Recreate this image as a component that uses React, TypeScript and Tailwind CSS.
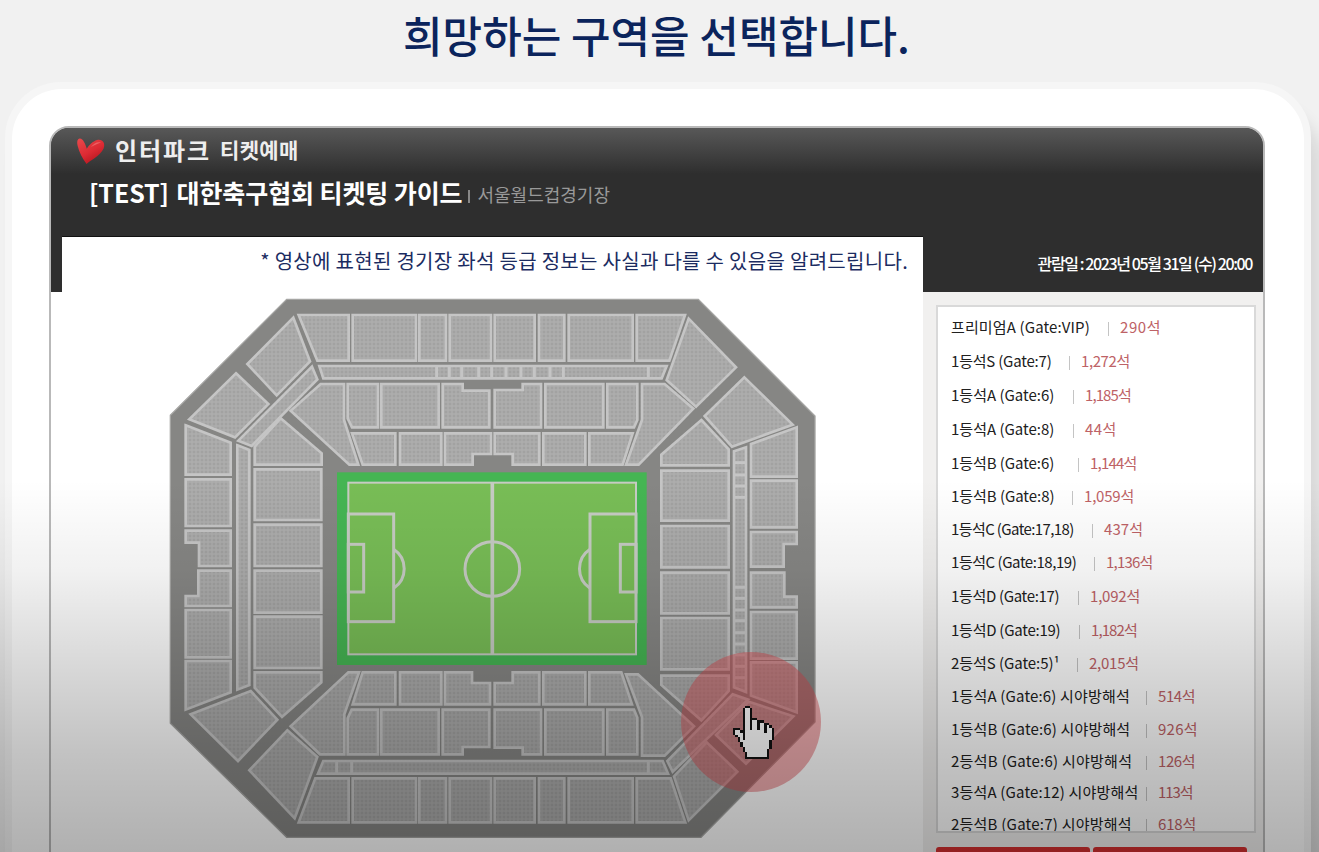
import React from "react";

type Zone = {
  name: string;
  seats: string;
  height: number;
  bar: number;
  nameSpacing: number;
  seatSpacing: number;
};

const zones: Zone[] = [
  { name: "프리미엄A (Gate:VIP)", seats: "290석", height: 34, bar: 157, nameSpacing: 0.13, seatSpacing: 0.6 },
  { name: "1등석S (Gate:7)", seats: "1,272석", height: 34, bar: 118, nameSpacing: -0.2, seatSpacing: -0.4 },
  { name: "1등석A (Gate:6)", seats: "1,185석", height: 34, bar: 122, nameSpacing: 0, seatSpacing: -0.9 },
  { name: "1등석A (Gate:8)", seats: "44석", height: 34, bar: 122, nameSpacing: 0, seatSpacing: 0.4 },
  { name: "1등석B (Gate:6)", seats: "1,144석", height: 34, bar: 127, nameSpacing: -0.07, seatSpacing: -0.8 },
  { name: "1등석B (Gate:8)", seats: "1,059석", height: 33, bar: 121, nameSpacing: -0.05, seatSpacing: -0.2 },
  { name: "1등석C (Gate:17,18)", seats: "437석", height: 32, bar: 141, nameSpacing: -0.6, seatSpacing: 0.1 },
  { name: "1등석C (Gate:18,19)", seats: "1,136석", height: 34, bar: 143, nameSpacing: -0.45, seatSpacing: -0.8 },
  { name: "1등석D (Gate:17)", seats: "1,092석", height: 34, bar: 127, nameSpacing: -0.33, seatSpacing: -0.2 },
  { name: "1등석D (Gate:19)", seats: "1,182석", height: 34, bar: 128, nameSpacing: -0.25, seatSpacing: -0.9 },
  { name: "2등석S (Gate:5)¹", seats: "2,015석", height: 33, bar: 126, nameSpacing: -0.05, seatSpacing: -0.25 },
  { name: "1등석A (Gate:6) 시야방해석", seats: "514석", height: 33, bar: 195, nameSpacing: 0.17, seatSpacing: -0.4 },
  { name: "1등석B (Gate:6) 시야방해석", seats: "926석", height: 32, bar: 195, nameSpacing: 0.15, seatSpacing: 0.25 },
  { name: "2등석B (Gate:6) 시야방해석", seats: "126석", height: 32, bar: 195, nameSpacing: 0.25, seatSpacing: -0.4 },
  { name: "3등석A (Gate:12) 시야방해석", seats: "113석", height: 31, bar: 195, nameSpacing: 0.17, seatSpacing: -1.1 },
  { name: "2등석B (Gate:7) 시야방해석", seats: "618석", height: 32, bar: 195, nameSpacing: 0.23, seatSpacing: -0.2 },
];

const box = (x1: number, y1: number, x2: number, y2: number) =>
  `${x1},${y1} ${x2},${y1} ${x2},${y2} ${x1},${y2}`;

// Seat blocks are grouped by the part of the stand they belong to.
const stands: { x: number; y: number; blocks: string[] }[] = [
  {
    x: 0,
    y: 0,
    blocks: [
      "416,75 566,75 566,212 472,212",
      box(578, 75, 768, 212),
      box(778, 75, 858, 212),
      box(869, 75, 993, 212),
      "478,228 1520,228 1505,265 490,265",
      "400,83 450,214 350,316 262,222",
      "456,230 472,268 275,468 235,452",
      "228,250 325,342 225,442 88,388",
      "77,406 212,458 212,554 77,554",
      "482,282 552,282 552,390 595,524 568,524 392,362",
      "362,385 485,490 485,524 284,524 284,470",
      "232,466 268,480 268,1185 232,1199",
      "563,282 654,282 654,412 576,412 563,385",
      box(664, 282, 836, 412),
      "848,282 908,282 908,302 988,302 988,412 848,412",
      "576,430 706,430 706,524 608,524",
      box(720, 430, 844, 524),
      "855,430 993,430 993,492 938,492 938,524 855,524",
    ],
  },
  {
    x: 990,
    y: 0,
    blocks: [
      box(14, 75, 134, 212),
      box(147, 75, 223, 212),
      box(236, 75, 428, 212),
      "440,75 585,75 538,212 440,212",
      "596,86 738,232 618,350 530,270",
      "763,262 908,404 726,470 644,378",
      "456,282 524,282 610,356 446,524 408,524 456,390",
      "634,390 716,478 716,526 514,526 514,494",
      "783,462 920,412 920,560 783,560",
      "732,484 768,472 768,1206 732,1192",
      "14,300 98,300 98,282 153,282 153,412 14,412",
      box(166, 282, 340, 412),
      "352,282 442,282 442,390 432,412 352,412",
      "14,430 148,430 148,524 68,524 68,492 14,492",
      box(160, 430, 286, 524),
      "298,430 428,430 398,524 298,524",
    ],
  },
  {
    x: 0,
    y: 540,
    blocks: [
      box(77, 28, 212, 168),
      "77,182 212,182 212,288 117,288 117,218 77,218",
      "115,302 212,302 212,408 77,408 77,378 115,378",
      box(77, 420, 212, 562),
      box(284, -2, 484, 150),
      box(284, 164, 484, 288),
      box(284, 302, 484, 428),
      box(284, 440, 484, 594),
    ],
  },
  {
    x: 990,
    y: 540,
    blocks: [
      box(783, 32, 920, 172),
      "783,186 920,186 920,222 881,222 881,290 783,290",
      "783,308 883,308 883,380 920,380 920,412 783,412",
      box(783, 426, 920, 566),
      box(514, 2, 716, 152),
      box(514, 168, 716, 292),
      box(514, 308, 716, 430),
      box(514, 444, 716, 598),
    ],
  },
  {
    x: 0,
    y: 1095,
    blocks: [
      "77,18 212,18 212,112 77,164",
      "284,52 484,52 484,82 366,186 284,98",
      "272,108 352,194 234,318 92,178",
      "382,226 472,306 404,490 268,346",
      "565,52 597,52 553,178 553,298 480,298 392,214",
      "608,52 706,52 706,148 578,148",
      box(720, 52, 844, 148),
      "855,52 936,52 936,84 990,84 990,148 855,148",
      "575,164 654,164 654,298 563,298 563,190",
      box(664, 164, 836, 298),
      "848,164 988,164 988,276 908,276 908,298 848,298",
      "490,318 1508,318 1524,356 474,356",
      "466,370 566,370 566,502 416,502",
      box(578, 370, 768, 502),
      box(778, 370, 858, 502),
      box(869, 370, 993, 502),
    ],
  },
  {
    x: 990,
    y: 1095,
    blocks: [
      box(14, 370, 134, 502),
      box(147, 370, 223, 502),
      box(236, 370, 428, 502),
      "440,370 542,370 586,502 440,502",
      "552,364 650,262 742,350 596,496",
      "728,118 774,134 548,350 532,318",
      "776,140 910,184 768,326 678,240",
      "783,22 920,22 920,172 783,122",
      "514,62 716,62 716,108 634,196 514,90",
      "408,58 444,58 612,214 524,302 456,302 456,186",
      "68,52 148,52 148,148 14,148 14,84 68,84",
      box(160, 52, 286, 148),
      "298,52 394,52 426,148 298,148",
      "14,164 153,164 153,298 98,298 98,278 14,278",
      box(166, 164, 340, 298),
      "352,164 432,164 442,188 442,298 352,298",
    ],
  },
];

const topTicks = [830, 868, 905, 956, 995, 1038, 1083, 1123, 1170, 1210, 1465];
const sideTicks = [518, 555, 588, 622, 892, 925, 960, 992, 1028, 1062, 1095, 1129, 1163];

function Stadium() {
  return (
    <svg className="block overflow-visible" width="655" height="550" viewBox="0 0 1965 1650">
      <defs>
        <pattern id="seats" width="12" height="12" patternUnits="userSpaceOnUse">
          <rect width="12" height="12" fill="#afafae" />
          <rect x="2" y="2" width="8" height="8" fill="#a2a2a1" />
        </pattern>
      </defs>
      <polygon
        points="31,376 380,28 1615,28 1965,378 1965,1296 1623,1642 380,1642 31,1300"
        fill="#868684"
        stroke="#a5a5a3"
        strokeWidth="4"
      />
      <g fill="url(#seats)" stroke="#c5c5c5" strokeWidth="8">
        {stands.map((s, i) => (
          <g key={i} transform={`translate(${s.x} ${s.y})`}>
            {s.blocks.map((p) => (
              <polygon key={p} points={p} />
            ))}
          </g>
        ))}
      </g>
      <g stroke="#c5c5c5" strokeWidth="9">
        {topTicks.map((x) => (
          <line key={x} x1={x} x2={x} y1="228" y2="265" />
        ))}
        {[530, 575, 1465].map((x) => (
          <line key={x} x1={x} x2={x} y1="1413" y2="1451" />
        ))}
        {sideTicks.map((y) => (
          <line key={y} y1={y} y2={y} x1="1722" x2="1758" />
        ))}
      </g>
      <g transform="translate(0 540)">
        <rect x="531" y="7" width="929" height="578" fill="#45b553" />
        <g fill="none" stroke="#c6cbc3" strokeWidth="9">
          <rect x="565" y="38" width="863" height="515" fill="#78bd56" strokeWidth="6" />
          <line x1="997" x2="997" y1="38" y2="553" strokeWidth="11" />
          <circle cx="997" cy="297" r="82" />
          <rect x="565" y="132" width="136" height="323" />
          <rect x="565" y="223" width="46" height="143" />
          <path d="M701 238A70 70 0 0 1 701 355" />
          <rect x="1290" y="132" width="138" height="323" />
          <rect x="1381" y="223" width="47" height="143" />
          <path d="M1290 238A70 70 0 0 0 1290 355" />
        </g>
      </g>
    </svg>
  );
}

// Pointer glyph: X is outline, o is fill.
const hand = [
  ".....XX..........",
  "....XooX.........",
  "....XooX.........",
  "....XooX.........",
  "....XooX.........",
  "....XooXXX.......",
  "....XooXooXXX....",
  "....XooXooXooXX..",
  "....XooXooXooXoX.",
  "XXX.XooXooXooXooX",
  "XooXXooooooooXooX",
  "XoooXoooooooooooX",
  ".XooXoooooooooooX",
  "..XoXoooooooooooX",
  "..XooooooooooooX.",
  "...XoooooooooooX.",
  "...XoooooooooooX.",
  "....XooooooooooX.",
  "....XoooooooooX..",
  ".....XooooooooX..",
  ".....XooooooooX..",
  ".....XXXXXXXXXX..",
];

function HandPointer() {
  return (
    <svg
      className="absolute left-[733px] top-[706px]"
      width="41"
      height="53"
      viewBox="0 0 17 22"
      preserveAspectRatio="none"
      shapeRendering="crispEdges"
    >
      {hand.flatMap((row, y) =>
        row.split("").map((c, x) =>
          c === "." ? null : (
            <rect
              key={`${x}-${y}`}
              x={x}
              y={y}
              width="1.02"
              height="1.02"
              fill={c === "X" ? "#111111" : "#ffffff"}
            />
          )
        )
      )}
    </svg>
  );
}

function Heart() {
  return (
    <svg width="30" height="28" viewBox="0 0 30 28">
      <defs>
        <linearGradient id="heart" x1="0" y1="0" x2="0.6" y2="1">
          <stop offset="0" stopColor="#ea4a4c" />
          <stop offset="0.6" stopColor="#dc2a33" />
          <stop offset="1" stopColor="#b5161f" />
        </linearGradient>
      </defs>
      <path
        d="M3.8 1.500C1.200 1.800 .8 5 1.700 9C3 15 6.500 21.500 10.600 27C13.500 23.500 24 19.500 27.600 11.500C29.800 5.500 26 1.600 21 3C17 4.300 12.800 8 10.800 11.800C9.500 7 7 1.300 3.800 1.500Z"
        fill="url(#heart)"
      />
      <path d="M15 10C18 5.800 22 4.300 25 5.600C22.500 6.500 19 8 15 10Z" fill="#f58080" opacity=".6" />
    </svg>
  );
}

export default function App() {
  return (
    <div className="relative h-[852px] w-[1319px] overflow-hidden bg-[#f1f1f1] font-['Noto_Sans_CJK_KR',sans-serif] whitespace-nowrap">
      <h1 className="flex h-[82px] items-center justify-center pb-[14px] pr-[6px] text-[43px] font-medium leading-none text-[#0b245c]">
        희망하는 구역을 선택합니다.
      </h1>

      <div className="ml-[5px] h-[900px] w-[1306px] rounded-[56px] bg-[#f6f6f6] p-[7px] shadow-[12px_26px_16px_rgba(0,0,0,0.1)]">
        <div className="h-full rounded-[50px] bg-white pl-[37px] pt-[37px]">
          <div className="h-[800px] w-[1216px] overflow-hidden rounded-t-[20px] border-2 border-[#b9b9b9] bg-white">
            <header className="flex h-[164px] flex-col bg-[#2e2e2e] bg-[linear-gradient(#585858,#2e2e2e_46px)]">
              <div className="flex h-[46px] items-center pl-[25px] text-[#eeeeee]">
                <Heart />
                <span className="-mt-[3px] ml-[9px] text-[24px] font-bold leading-none tracking-[1.9px]">인터파크</span>
                <span className="-mt-[3px] ml-[9px] text-[21px] font-bold leading-none tracking-[0.4px]">티켓예매</span>
              </div>
              <div className="flex h-[40px] items-center pl-[38px] leading-none text-white">
                <span className="-mt-[3px] text-[25px] font-bold tracking-[-0.1px]">
                  <span className="mr-[2px]">[TEST]</span> 대한축구협회 티켓팅 가이드
                </span>
                <span className="ml-[6px] mt-[5px] h-[13px] w-[2px] bg-[#888888]" />
                <span className="ml-[7px] text-[18px] text-[#999999]">서울월드컵경기장</span>
              </div>
              <div className="mt-auto flex h-[56px] items-start justify-between pl-[11px]">
                <div className="flex h-[56px] w-[861px] items-center justify-end border-t border-[#111111] bg-white pr-[15px] text-[20px] leading-none tracking-[0.3px] text-[#1b2b61]">
                  <span className="-mt-[7px]">* 영상에 표현된 경기장 좌석 등급 정보는 사실과 다를 수 있음을 알려드립니다.</span>
                </div>
                <div className="flex h-[54px] items-center pr-[11px] text-[16px] font-medium leading-none tracking-[-1.4px] text-white">
                  관람일 : 2023년 05월 31일 (수) 20:00
                </div>
              </div>
            </header>

            <div className="flex h-[600px]">
              <main className="w-[872px] bg-white pl-[109px]">
                <div className="-mt-[2px]">
                  <Stadium />
                </div>
              </main>
              <aside className="w-[340px] bg-[#f1f0ef] pl-[13px] pt-[13px]">
                <ul className="h-[528px] w-[320px] overflow-hidden border-2 border-[#d9d9d9] bg-white pl-[13px] pt-[2px] text-[15px] leading-none text-[#202020]">
                  {zones.map((z) => (
                    <li key={z.name} className="flex items-center" style={{ height: z.height }}>
                      <span style={{ width: z.bar, letterSpacing: z.nameSpacing }}>{z.name}</span>
                      <span className="mt-[5px] h-[14px] w-px bg-[#c4c4c4]" />
                      <span className="ml-[11px] text-[#be6266]" style={{ letterSpacing: z.seatSpacing }}>
                        {z.seats}
                      </span>
                    </li>
                  ))}
                </ul>
                <div className="mt-[14px] flex gap-[3px]">
                  <div className="h-[40px] w-[154px] rounded-[3px] bg-[#d63030]" />
                  <div className="h-[40px] w-[154px] rounded-[3px] bg-[#d63030]" />
                </div>
              </aside>
            </div>
          </div>
        </div>
      </div>

      <div className="absolute left-[681px] top-[652px] h-[140px] w-[140px] rounded-full bg-[rgba(220,72,78,0.45)]" />
      <HandPointer />
      <div className="pointer-events-none absolute inset-x-0 bottom-0 h-[372px] bg-[linear-gradient(rgba(0,0,0,0)_0px,rgba(0,0,0,0.055)_90px,rgba(0,0,0,0.155)_190px,rgba(0,0,0,0.235)_270px,rgba(0,0,0,0.31)_372px)]" />
    </div>
  );
}
